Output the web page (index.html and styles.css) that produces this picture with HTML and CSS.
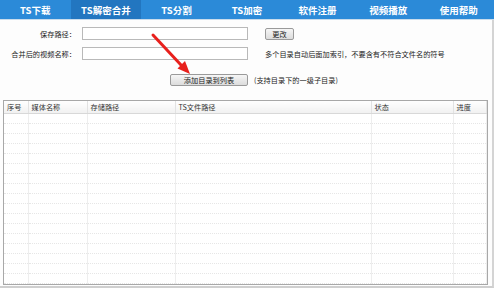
FILE: index.html
```html
<!DOCTYPE html>
<html lang="zh-CN">
<head>
    <meta charset="UTF-8">
    <title>TS解密合并</title>
    <link rel="stylesheet" href="styles.css">
</head>
<body>
    <div class="nav">
        <span class="tab">TS下载</span>
        <span class="tab active">TS解密合并</span>
        <span class="tab">TS分割</span>
        <span class="tab">TS加密</span>
        <span class="tab">软件注册</span>
        <span class="tab">视频播放</span>
        <span class="tab">使用帮助</span>
    </div>

    <div class="panel">
        <div class="form">
            <div class="row">
                <label class="label">保存路径：</label>
                <input class="field" type="text">
                <button class="btn small">更改</button>
            </div>
            <div class="row">
                <label class="label">合并后的视频名称：</label>
                <input class="field" type="text">
                <span class="hint">多个目录自动后面加索引，不要含有不符合文件名的符号</span>
            </div>
            <div class="row add-row">
                <button class="btn add">添加目录到列表</button>
                <span class="note">(支持目录下的一级子目录)</span>
            </div>
        </div>

        <svg class="arrow" width="50" height="50" viewBox="0 0 50 50">
            <line x1="3" y1="3" x2="31" y2="33" stroke="#e8201c" stroke-width="3" stroke-linecap="round"/>
            <polygon points="40,42 27.5,36.5 35,29" fill="#e8201c"/>
        </svg>

        <div class="list">
            <table>
                <colgroup>
                    <col style="width: 24px">
                    <col style="width: 59px">
                    <col style="width: 88px">
                    <col style="width: 196px">
                    <col style="width: 82px">
                    <col>
                </colgroup>
                <thead>
                    <tr><th>序号</th><th>媒体名称</th><th>存储路径</th><th>TS文件路径</th><th>状态</th><th>进度</th></tr>
                </thead>
                <tbody>
                    <tr><td></td><td></td><td></td><td></td><td></td><td></td></tr>
                    <tr><td></td><td></td><td></td><td></td><td></td><td></td></tr>
                    <tr><td></td><td></td><td></td><td></td><td></td><td></td></tr>
                    <tr><td></td><td></td><td></td><td></td><td></td><td></td></tr>
                    <tr><td></td><td></td><td></td><td></td><td></td><td></td></tr>
                    <tr><td></td><td></td><td></td><td></td><td></td><td></td></tr>
                    <tr><td></td><td></td><td></td><td></td><td></td><td></td></tr>
                    <tr><td></td><td></td><td></td><td></td><td></td><td></td></tr>
                    <tr><td></td><td></td><td></td><td></td><td></td><td></td></tr>
                    <tr><td></td><td></td><td></td><td></td><td></td><td></td></tr>
                    <tr><td></td><td></td><td></td><td></td><td></td><td></td></tr>
                    <tr><td></td><td></td><td></td><td></td><td></td><td></td></tr>
                    <tr><td></td><td></td><td></td><td></td><td></td><td></td></tr>
                    <tr><td></td><td></td><td></td><td></td><td></td><td></td></tr>
                    <tr><td></td><td></td><td></td><td></td><td></td><td></td></tr>
                    <tr><td></td><td></td><td></td><td></td><td></td><td></td></tr>
                    <tr><td></td><td></td><td></td><td></td><td></td><td></td></tr>
                </tbody>
            </table>
        </div>
    </div>
</body>
</html>
```

FILE: styles.css
```css
body {
    margin: 0;
    width: 494px;
    height: 288px;
    overflow: hidden;
    font-family: "Noto Sans CJK SC", "Liberation Sans", sans-serif;
    font-size: 7.2px;
    color: #222;
    background-color: #fff;
}
.nav {
    display: flex;
    height: 19px;
    background-color: #2b8ad8;
    border-bottom: 1px solid #c9dcec;
}
.tab {
    flex: 1;
    display: flex;
    align-items: center;
    justify-content: center;
    color: #fff;
    font-size: 9.5px;
    font-weight: bold;
}
.tab.active {
    background-color: #2276c0;
}
.panel {
    position: relative;
    height: 268px;
    border-right: 2px solid #d4d4d4;
    border-bottom: 2px solid #cfcfcf;
    box-sizing: border-box;
    background-color: #fdfdfd;
}
.form {
    display: flex;
    flex-direction: column;
    padding-top: 7px;
}
.row {
    display: flex;
    align-items: center;
    height: 13px;
    margin-bottom: 7px;
    white-space: nowrap;
}
.label {
    flex-shrink: 0;
    width: 76px;
    text-align: right;
    margin-right: 6px;
    color: #222;
}
.field {
    flex-shrink: 0;
    width: 166px;
    height: 13px;
    box-sizing: border-box;
    margin: 0 17px 0 0;
    padding: 0;
    border: 1px solid #b9b9b9;
    background-color: #fff;
}
.btn {
    flex-shrink: 0;
    height: 12px;
    padding: 0;
    box-sizing: border-box;
    font-family: inherit;
    font-size: 7.2px;
    line-height: 10px;
    color: #222;
    border: 1px solid #9a9a9a;
    border-radius: 2px;
    background: linear-gradient(#f6f6f6, #dcdcdc);
}
.btn.small {
    width: 29px;
}
.hint {
    color: #222;
}
.add-row {
    margin-top: 6px;
    padding-left: 170px;
}
.btn.add {
    width: 78px;
    margin-right: 6px;
}
.note {
    color: #222;
}
.arrow {
    position: absolute;
    left: 150px;
    top: 12px;
}
.list {
    margin: 7px 4px 0 3px;
    border: 1px solid #a8a8a8;
    height: 185px;
    box-sizing: border-box;
    overflow: hidden;
    background-color: #fff;
}
table {
    width: 100%;
    border-collapse: collapse;
    table-layout: fixed;
}
th {
    height: 12px;
    padding: 0 0 0 3px;
    text-align: left;
    font-weight: normal;
    color: #333;
    border-right: 1px solid #e2e2e2;
    border-bottom: 1px solid #d8d8d8;
    background: linear-gradient(#ffffff, #f1f1f1);
    white-space: nowrap;
}
td {
    height: 9px;
    padding: 0;
    border-right: 1px solid #eeeeee;
    border-bottom: 1px dotted #e6e6e6;
}
```
